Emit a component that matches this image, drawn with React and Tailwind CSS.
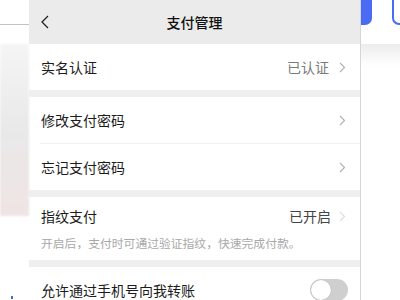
import React from 'react';

const font = { fontFamily: '"Noto Sans CJK SC", "Noto Sans", sans-serif' };

const Chevron = ({ className = 'text-[#b0b0b0]' }) => (
  <svg className={`w-[7px] h-[11px] ${className}`} viewBox="0 0 7 11" fill="none">
    <path d="M1 1l4.5 4.5L1 10" stroke="currentColor" strokeWidth="1.1" />
  </svg>
);

const Row = ({ label, value, valueClass = 'text-[#7a7a7a]', chevronClass, divider }) => (
  <div className={`h-[46px] shrink-0 flex items-center pr-[14px] bg-white ${divider ? 'h-[47px] border-b border-[#f1f1f1] ml-[11px] pl-[1px]' : 'pl-3'}`}>
    <span className="flex-1 text-[14px] text-[#1c1c1c]">{label}</span>
    {value && <span className={`text-[14px] mr-[10px] ${valueClass}`}>{value}</span>}
    <Chevron className={chevronClass} />
  </div>
);

const Gap = () => <div className="h-[7px] shrink-0 bg-[#efefef]" />;

export default function App() {
  return (
    <div className="w-[400px] h-[300px] overflow-hidden flex bg-white" style={font}>
      {/* left background */}
      <div className="w-[29px] flex flex-col shrink-0">
        <div className="h-[24px] shrink-0 bg-white" />
        <div className="h-[1px] shrink-0 bg-[#c2c2c2]" />
        <div className="h-[19px] shrink-0 bg-white" />
        <div className="h-[172px] shrink-0 bg-gradient-to-b from-[#f5f5f5] via-[#e9e9e9] to-[#f0e4e4] blur-[1px]" />
        <div className="flex-1 bg-white flex flex-col justify-end pl-[11px] pb-[1px]">
          <div className="w-[2px] h-[3px] bg-[#3b6fd8]" />
        </div>
      </div>

      {/* panel */}
      <div className="w-[332px] shrink-0 flex flex-col bg-white border-r border-[#d6d6d6]">
        <div className="h-[44px] shrink-0 bg-[#ebebeb] grid grid-cols-[40px_1fr_40px] items-center">
          <div className="pl-[11px] flex items-center">
            <svg className="w-[9px] h-[14px] text-[#222]" viewBox="0 0 9 14" fill="none">
              <path d="M8 1L2 7l6 6" stroke="currentColor" strokeWidth="1.3" />
            </svg>
          </div>
          <div className="text-center text-[14px] font-medium text-[#111]">支付管理</div>
          <div />
        </div>
        <Row label="实名认证" value="已认证" />
        <Gap />
        <Row label="修改支付密码" divider />
        <Row label="忘记支付密码" />
        <Gap />
        <div className="shrink-0 bg-white pl-3 pr-[14px] pt-[9px] pb-[8px]">
          <div className="h-[20px] flex items-center">
            <span className="flex-1 text-[14px] text-[#1c1c1c]">指纹支付</span>
            <span className="text-[14px] text-[#444] mr-[8px]">已开启</span>
            <Chevron className="text-[#dcdcdc]" />
          </div>
          <div className="mt-[8px] h-[18px] flex items-center text-[11.8px] text-[#a8a8a8] whitespace-nowrap">
            开启后，支付时可通过验证指纹，快速完成付款。
          </div>
        </div>
        <Gap />
        <div className="h-[46px] shrink-0 flex items-center pl-3 pr-[12px] bg-white">
          <span className="flex-1 text-[14px] text-[#1c1c1c]">允许通过手机号向我转账</span>
          <div className="w-[38px] h-[22px] rounded-full bg-[#cfcfcf] p-[1px] flex items-center">
            <div className="w-[20px] h-[20px] rounded-full bg-white shadow-[0_0_1px_rgba(0,0,0,0.3)]" />
          </div>
        </div>
      </div>

      {/* right background */}
      <div className="flex-1 flex flex-col">
        <div className="h-[44px] shrink-0 flex items-start">
          <div className="w-[11px] h-[25px] bg-[#4a6cf5] rounded-br-[7px]" />
          <div className="flex-1" />
          <div className="w-[8px] h-[25px] border-l-2 border-b-2 border-[#4a6cf5] rounded-bl-[7px]" />
        </div>
        <div className="h-[22px] shrink-0 bg-gradient-to-b from-[#ececec] to-white" />
        <div className="flex-1 bg-white" />
      </div>
    </div>
  );
}
